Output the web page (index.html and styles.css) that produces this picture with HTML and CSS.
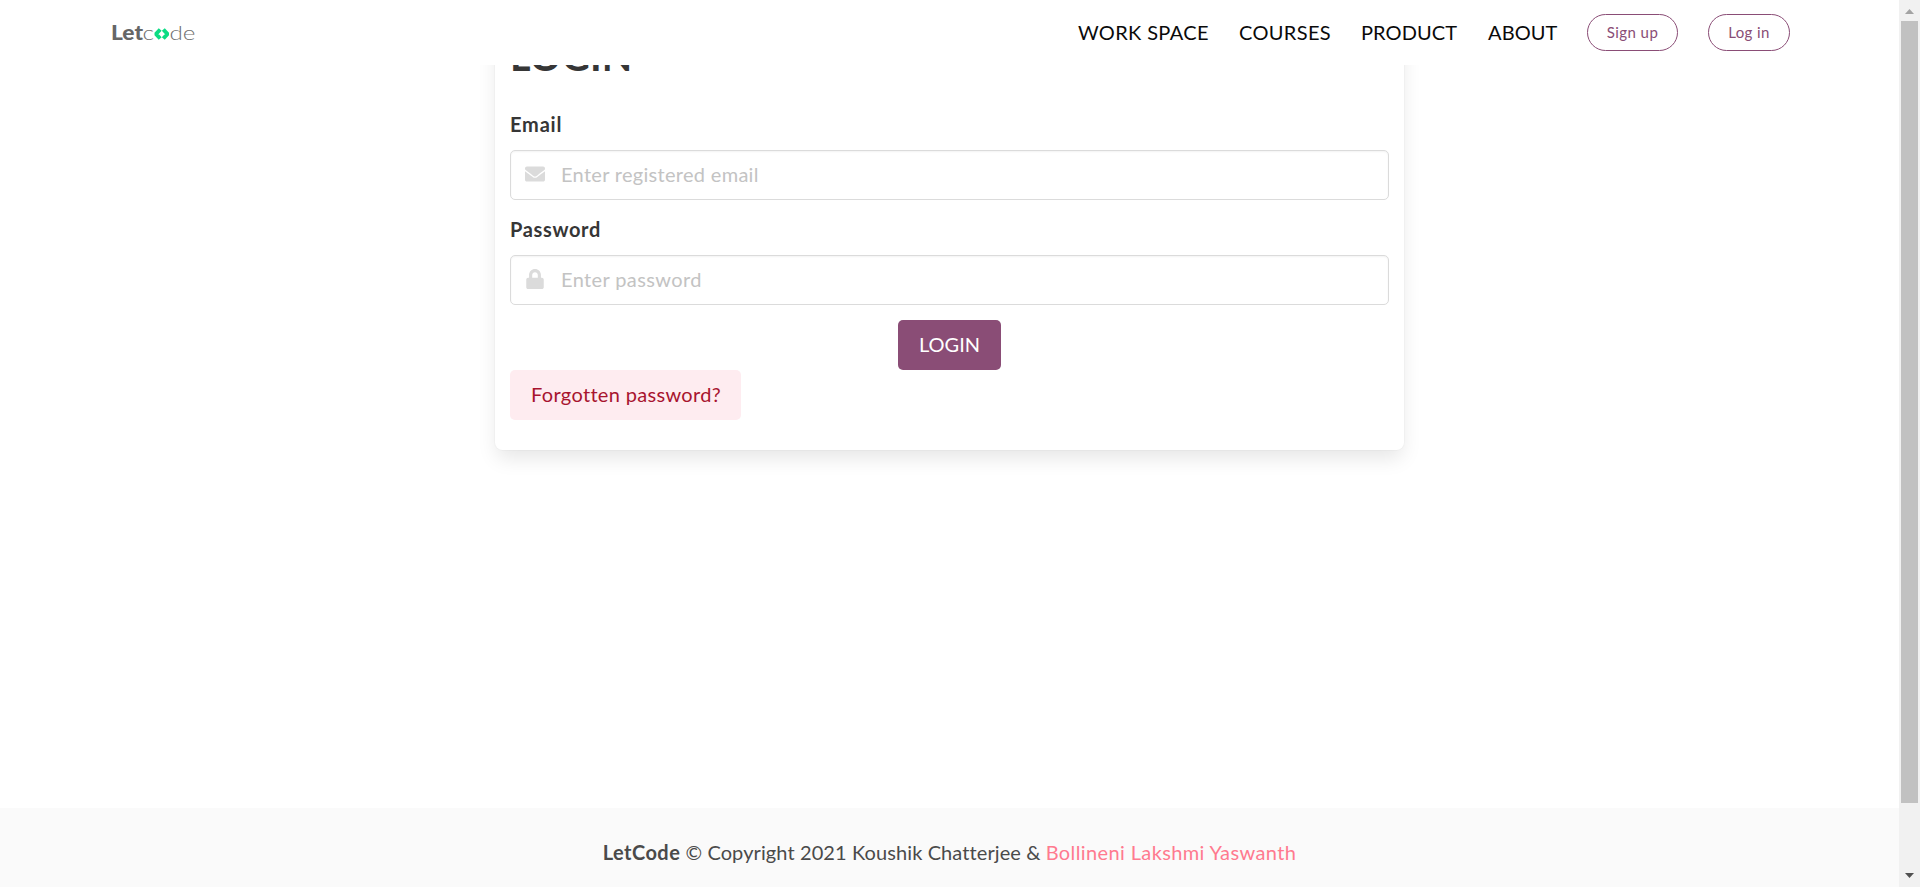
FILE: index.html
```html
<!DOCTYPE html>
<html lang="en">
<head>
<meta charset="utf-8">
<title>LetCode</title>
<link rel="stylesheet" href="styles.css">
</head>
<body>
<div class="window">
  <div class="page">
    <nav class="navbar">
      <svg class="logo" width="86" height="31" viewBox="0 0 86 31" role="img" aria-label="Letcode">
        <text class="logo-bold" x="-1" y="23" textLength="32" lengthAdjust="spacingAndGlyphs">Let</text>
        <text class="logo-thin" x="30.500" y="23" textLength="11.500" lengthAdjust="spacingAndGlyphs">c</text>
        <path class="logo-mark" d="M48.200 12.500 44.500 16.500v1L48.200 21.500M51.300 12.500 55 16.500v1L51.300 21.500"/>
        <text class="logo-thin" x="57.500" y="23" textLength="26" lengthAdjust="spacingAndGlyphs">de</text>
      </svg>
      <div class="menu">
        <a class="link work">WORK SPACE</a>
        <a class="link courses">COURSES</a>
        <a class="link product">PRODUCT</a>
        <a class="link about">ABOUT</a>
        <a class="pill signup">Sign up</a>
        <a class="pill signin">Log in</a>
      </div>
    </nav>
    <main class="content">
      <form class="card">
        <h1 class="title">LOGIN</h1>
        <label class="label email">Email</label>
        <div class="field">
          <svg class="icon" width="20" height="20" viewBox="0 0 512 512"><path d="M502.3 190.8c3.900-3.100 9.700-.2 9.700 4.700V400c0 26.500-21.500 48-48 48H48c-26.500 0-48-21.500-48-48V195.600c0-5 5.700-7.800 9.700-4.700 22.400 17.400 52.100 39.500 154.100 113.600 21.100 15.400 56.700 47.800 92.200 47.600 35.700.3 72-32.800 92.300-47.600 102-74.100 131.600-96.300 154-113.700zM256 320c23.200.4 56.600-29.200 73.400-41.400 132.700-96.300 142.800-104.700 173.400-128.700 5.800-4.500 9.200-11.500 9.200-18.900v-19c0-26.500-21.500-48-48-48H48c-26.500 0-48 21.500-48 48v19c0 7.400 3.400 14.300 9.200 18.900 30.600 23.900 40.700 32.400 173.400 128.700 16.800 12.200 50.200 41.800 73.400 41.400z"/></svg>
          <span class="hint hint-email">Enter registered email</span>
        </div>
        <label class="label password">Password</label>
        <div class="field">
          <svg class="icon" width="20" height="20" viewBox="-32 0 512 512"><path d="M400 224h-24v-72C376 68.200 307.800 0 224 0S72 68.200 72 152v72H48c-26.500 0-48 21.500-48 48v192c0 26.500 21.500 48 48 48h352c26.500 0 48-21.500 48-48V272c0-26.500-21.500-48-48-48zm-104 0H152v-72c0-39.700 32.300-72 72-72s72 32.300 72 72v72z"/></svg>
          <span class="hint hint-password">Enter password</span>
        </div>
        <button type="button" class="submit">LOGIN</button>
        <a class="forgot">Forgotten password?</a>
      </form>
    </main>
    <footer class="footer"><p class="copyright"><strong class="brand">LetCode</strong> <span class="owner">© Copyright 2021 Koushik Chatterjee &amp;</span> <a class="author">Bollineni Lakshmi Yaswanth</a></p></footer>
  </div>
  <div class="scrollbar">
    <svg width="21" height="21" viewBox="0 0 21 21"><path fill="#a3a3a3" d="M6 14 10.500 9 15 14z"/></svg>
    <div class="thumb"></div>
    <svg width="21" height="21" viewBox="0 0 21 21"><path fill="#505050" d="M6 7 10.500 12 15 7z"/></svg>
  </div>
</div>
</body>
</html>
```
FILE: styles.css
```css
* { box-sizing: border-box; }
body { margin: 0; font: 400 20px/30px Lato, sans-serif; color: #4a4a4a; background: #fff; }
.window { display: flex; width: 100%; height: 887px; overflow: hidden; }
.page { flex: 1; height: 887px; display: flex; flex-direction: column; overflow: hidden; }

.navbar { position: relative; z-index: 1; height: 65px; flex: none; padding: 0 109px 0 112px; background: #fff; display: flex; align-items: center; justify-content: space-between; }
.logo { overflow: visible; }
.logo-bold { font: 900 20px Lato, sans-serif; fill: #666; }
.logo-thin { font: 300 20px Lato, sans-serif; fill: #707070; }
.logo-mark { fill: none; stroke: #0bdc84; stroke-width: 4; }
.menu { display: flex; align-items: center; gap: 30px; }
.link { padding-bottom: 2px; color: #0a0a0a; white-space: nowrap; }
.work { width: 131px; letter-spacing: .35px; }
.courses { width: 92px; letter-spacing: .35px; }
.product { width: 97px; letter-spacing: .1px; }
.about { width: 69px; letter-spacing: .1px; }
.pill { height: 37px; border: 1px solid #8a4d76; border-radius: 18.5px; color: #8a4d76; font-size: 15px; line-height: 35px; text-align: center; }
.signup { width: 91px; letter-spacing: .45px; }
.signin { width: 82px; letter-spacing: .4px; }

.content { flex: none; height: 743px; }
.card { width: 909px; height: 430px; margin: -45px 0 0 495px; padding: 15px 15px 30px; border-radius: 7.500px; background: #fff; box-shadow: 0 10px 20px -2.500px rgba(10,10,10,.1), 0 0 0 1px rgba(10,10,10,.02); display: flex; flex-direction: column; align-items: stretch; }
.title { margin: 0 0 30px; height: 45px; font: 700 39.5px/41px Lato, sans-serif; color: #363636; }
.label { height: 30px; margin-bottom: 10px; line-height: 28px; color: #363636; font-weight: 700; }
.email { letter-spacing: .8px; }
.password { letter-spacing: .65px; }
.field { height: 50px; margin-bottom: 15px; padding: 0 14px; border: 1px solid #dbdbdb; border-radius: 5px; box-shadow: inset 0 1px 2px rgba(10,10,10,.05); display: flex; align-items: center; gap: 16px; }
.icon { fill: #dbdbdb; flex: none; margin-top: -3px; }
.hint { padding-bottom: 2px; color: #c3c3c3; }
.hint-email { letter-spacing: .3px; }
.hint-password { letter-spacing: .38px; }
.submit { align-self: center; width: 103px; height: 50px; padding: 0 0 2px; border: 0; border-radius: 5px; background: #8a4d76; color: #fff; font: 400 20px/30px Lato, sans-serif; }
.forgot { width: 231px; height: 50px; padding-left: 21px; border-radius: 5px; background: #feecf0; color: #a8142f; line-height: 48px; letter-spacing: .33px; }

.footer { flex: 1; padding-top: 29px; background: #fafafa; }
.copyright { margin: 0; text-align: center; white-space: nowrap; }
.brand { letter-spacing: .45px; }
.owner { letter-spacing: .1px; }
.author { color: #ff7a8f; letter-spacing: .38px; }

.scrollbar { width: 21px; flex: none; background: #f1f1f1; display: flex; flex-direction: column; align-items: center; }
.thumb { width: 17px; height: 782px; margin-bottom: 63px; background: #c1c1c1; }
```
